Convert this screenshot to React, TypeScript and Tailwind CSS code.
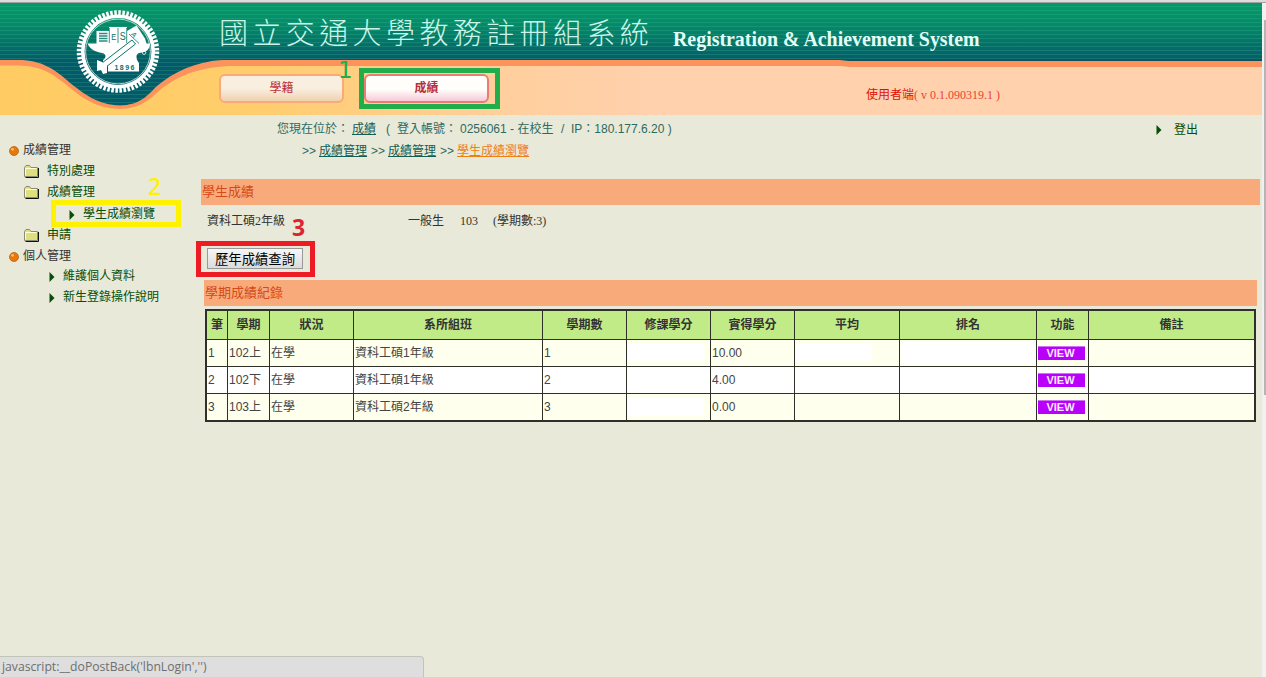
import React from "react";

const SANS = "font-['Liberation_Sans','Noto_Sans_CJK_TC',sans-serif]";
const SERIF = "font-['Liberation_Serif','Noto_Sans_CJK_TC',serif]";

function Banner() {
  const stripes = Array.from({ length: 25 }, (_, i) => 6 + i * 4);
  return (
    <svg className="absolute inset-0" width="1262" height="112" viewBox="0 3 1262 112">
      <defs>
        <linearGradient id="green" x1="0" y1="3" x2="0" y2="62" gradientUnits="userSpaceOnUse">
          <stop offset="0" stopColor="#049a68" />
          <stop offset="0.35" stopColor="#058b69" />
          <stop offset="1" stopColor="#045a68" />
        </linearGradient>
        <linearGradient id="sand" x1="0" y1="0" x2="1262" y2="0" gradientUnits="userSpaceOnUse">
          <stop offset="0" stopColor="#ffcb62" />
          <stop offset="0.2" stopColor="#ffcd6c" />
          <stop offset="0.4" stopColor="#ffcf9d" />
          <stop offset="0.52" stopColor="#ffd1ad" />
          <stop offset="1" stopColor="#ffd1ad" />
        </linearGradient>
        <clipPath id="greenClip">
          <path d="M0 3H1262V61H850L840 60H222C194 62 174 72 157 86C147 96 140 105 120 105.500C98 105 84 94 70 83C56 70 42 60 18 60H0Z" />
        </clipPath>
      </defs>
      <rect x="0" y="3" width="1262" height="112" fill="url(#sand)" />
      <path
        d="M0 60H18C42 60 56 70 70 83C84 94 98 105 120 105.500C140 105 147 96 157 86C174 72 194 60 222 60H840L850 61H1262V67H850L840 66H228C200 68 180 74 160 90C150 99 141 108.500 120 109C97 108.500 82 98 69 87C53 74 42 66 18 65.500H0Z"
        fill="#fc935c"
      />
      <g clipPath="url(#greenClip)">
        <rect x="0" y="3" width="1262" height="104" fill="url(#green)" />
        {stripes.map((y) => (
          <rect key={y} x="0" y={y} width="1262" height="1" fill="#58c6a0" opacity="0.2" />
        ))}
        <rect x="222" y="59" width="1040" height="2" fill="#174b55" opacity="0.65" />
      </g>
    </svg>
  );
}

function Seal() {
  return (
    <svg className="ml-[76px] mt-[7px] shrink-0" width="84" height="84" viewBox="0 0 84 84">
      <circle cx="42" cy="41.500" r="38.500" fill="none" stroke="#fff" strokeWidth="5.500" strokeDasharray="2.500 1.532" />
      <circle cx="42" cy="41.500" r="35.200" fill="none" stroke="#fff" strokeWidth="3.600" />
      <circle cx="42" cy="41.500" r="32.400" fill="none" stroke="#d7f0ea" strokeWidth="0.800" />
      <path d="M20.500 21H33V17H51V21L60.500 15.500L69 28.500L70.500 33.500H74C74 37 72 42 66 42.500C62 43 60.500 44 60.500 47C60.500 50 62 51.500 63 53H27V50C30 48 31 44 26 43C19 42 14 39 11.500 33.500H20.500Z" fill="#fff" />
      <path d="M32 53H63V61.500H32Z" fill="#fff" />
      <path d="M23 23.500h8.500M23 26h8.500M23 28.500h8.500M23 31h8.500" stroke="#2d8c80" strokeWidth="1.300" />
      <path d="M33.300 18v15M42 18v15M50.700 18v15" stroke="#087a69" strokeWidth="0.800" />
      <path d="M26 53L56 30L59.500 34L30 57Z" fill="#fff" stroke="#08756a" strokeWidth="1" />
      <path d="M21 50L26 52L31 56V63L27 64L25 60L21 61Z" fill="#fff" />
      <path d="M53 24L63 33.500" stroke="#08756a" strokeWidth="0.800" />
      <path d="M68 41a1.700 1.700 0 1 0 .1 0" fill="none" stroke="#fff" strokeWidth="0.900" />
      <g fill="#08706a" fontFamily="Liberation Sans">
        <text x="35.200" y="30" fontSize="9" textLength="5" lengthAdjust="spacingAndGlyphs">E</text>
        <text x="43.800" y="30" fontSize="10" textLength="6" lengthAdjust="spacingAndGlyphs">S</text>
        <text x="56" y="28" fontSize="7" transform="rotate(55 59 25)">A</text>
        <text x="38.500" y="60" fontSize="7" fontWeight="bold" textLength="20">1896</text>
      </g>
    </svg>
  );
}

function Orb() {
  return (
    <svg className="mt-[3px] shrink-0" width="10" height="10" viewBox="0 0 10 10">
      <circle cx="5" cy="5" r="4.500" fill="#e9780b" stroke="#a85d0e" strokeWidth="0.700" />
      <circle cx="3.500" cy="3.300" r="1.400" fill="#ffb86e" />
    </svg>
  );
}

function Folder() {
  return (
    <svg className="mt-px shrink-0" width="15" height="13" viewBox="0 0 15 13">
      <path d="M1.500 12.500H14.500V3" fill="none" stroke="#111" />
      <path d="M0.500 11.500V2.500L2 .5H5.500L7 2.500H13.500V11.500Z" fill="#dfdf80" stroke="#8a8a78" />
      <path d="M1.500 10.500V3.500H12.500" fill="none" stroke="#ffffd8" />
    </svg>
  );
}

function Arrow() {
  return (
    <svg className="mt-[2px] shrink-0" width="6" height="10" viewBox="0 0 6 10">
      <path d="M0.500 0V10L5.500 5Z" fill="#074f08" />
    </svg>
  );
}

function Sidebar() {
  const row = "flex h-[21px] items-center text-[#064d06]";
  return (
    <nav className="w-[200px] shrink-0 pt-[24px] text-[12px] leading-[20px]">
      <div className="flex h-[21px] items-center gap-[4px] pl-[9px] text-[#333]"><Orb />成績管理</div>
      <div className={`${row} gap-[8px] pl-[24px]`}><Folder />特別處理</div>
      <div className="flex h-[22px] items-center gap-[8px] pl-[24px] text-[#064d06]"><Folder />成績管理</div>
      <div className={`${row} gap-[8px] pl-[69px]`}><Arrow />學生成績瀏覽</div>
      <div className={`${row} gap-[8px] pl-[24px]`}><Folder />申請</div>
      <div className="flex h-[21px] items-center gap-[4px] pl-[9px] text-[#333]"><Orb />個人管理</div>
      <div className="flex h-[20px] items-center gap-[8px] pl-[49px] text-[#064d06]"><Arrow />維護個人資料</div>
      <div className="flex h-[21px] items-center gap-[8px] pl-[49px] text-[#064d06]"><Arrow />新生登錄操作說明</div>
    </nav>
  );
}

const headings = ["筆", "學期", "狀況", "系所組班", "學期數", "修課學分", "實得學分", "平均", "排名", "功能", "備註"];
const records = [
  ["1", "102上", "在學", "資科工碩1年級", "1", "", "10.00", "", "", "VIEW", ""],
  ["2", "102下", "在學", "資科工碩1年級", "2", "", "4.00", "", "", "VIEW", ""],
  ["3", "103上", "在學", "資科工碩2年級", "3", "", "0.00", "", "", "VIEW", ""],
];

function Blank({ row, col }: { row: number; col: number }) {
  if (col === 5 && row !== 1) return <span className="h-[18px] w-[76px] bg-white" />;
  if (col === 7 && row === 0) return <span className="h-[18px] w-[76px] bg-white" />;
  if (col === 8 && row === 0) return <span className="h-[22px] w-[134px] bg-white" />;
  return null;
}

function Records() {
  return (
    <div className="ml-[5px] mt-[3px] grid h-[113px] w-[1051px] grid-cols-[20px_41px_83px_188px_83px_83px_83px_104px_136px_51px_1fr] grid-rows-[28px_26px_26px_26px] gap-px border-2 border-[#30302a] bg-[#30302a] text-[12px] text-[#444]">
      {headings.map((h) => (
        <div key={h} className="flex items-center justify-center whitespace-nowrap bg-[#c0eb87] font-bold text-[#333]">{h}</div>
      ))}
      {records.map((r, i) =>
        r.map((c, j) => (
          <div
            key={`${i}-${j}`}
            className={`flex items-center whitespace-nowrap pl-px ${i === 1 ? "bg-white" : "bg-[#ffffee]"}`}
          >
            {c === "VIEW" ? (
              <span className="h-[14px] w-[47px] border-t border-[#cf70f5] bg-[#b900fa] pr-[2px] text-center text-[11px] font-bold leading-[13px] text-[#fbeaff]">VIEW</span>
            ) : (
              c || <Blank row={i} col={j} />
            )}
          </div>
        )),
      )}
    </div>
  );
}

export default function App() {
  return (
    <div className={`relative flex h-[677px] w-[1266px] flex-col overflow-hidden bg-[#e8e9d9] ${SANS}`}>
      <div className="h-[3px] shrink-0 border-b border-[#a0a0a0] bg-[#dcdcdc]" />
      <div className="flex min-h-0 flex-1">
        <div className="flex w-[1262px] shrink-0 flex-col">
          <header className="relative h-[112px] shrink-0">
            <Banner />
            <div className="relative flex h-full">
              <Seal />
              <div className="ml-[59px] flex flex-col">
                <div className="flex h-[60px] items-center whitespace-nowrap">
                  <h1 className="mb-[4px] w-[454px] font-['Noto_Sans_CJK_TC',sans-serif] text-[29px] font-light leading-[40px] tracking-[4.4px] text-[#c9f5ea]">國立交通大學教務註冊組系統</h1>
                  <span className="mt-[12px] font-['Liberation_Serif',serif] text-[19.9px] font-bold leading-[24px] text-[#e2fff9]">Registration &amp; Achievement System</span>
                </div>
                <div className="mt-[11px] flex h-[29px] items-center text-[12px] text-[#b9303c]">
                  <button className="h-[29px] w-[125px] rounded-[6px] border-2 border-[#f8aa78] bg-linear-to-b from-[#f8efe0] from-50% to-[#f0d0ae] pb-px">學籍</button>
                  <button className="ml-[20px] h-[29px] w-[125px] rounded-[6px] border-2 border-[#ee7a72] bg-linear-to-b from-[#fffefa] from-55% to-[#f6c9d8] pb-px font-bold">成績</button>
                  <span className={`ml-[377px] mt-[12px] whitespace-nowrap text-[#e01008] ${SERIF}`}>使用者端<span className="text-[#ec4038]">( v 0.1.090319.1 )</span></span>
                </div>
              </div>
            </div>
          </header>

          <div className="flex min-h-0 flex-1">
            <Sidebar />
            <main className="min-w-0 flex-1">
              <div className="flex h-[28px] items-center whitespace-pre pl-[77px] text-[12px] text-[#2e6a60]">
                <span className="w-[75px]">您現在位於：</span>
                <a className="w-[34px] text-[#125e52]"><u>成績</u></a>
                <span className="w-[11px]">(</span>
                <span className="w-[63px]">登入帳號：</span>
                <span className="w-[101px]">0256061 - 在校生</span>
                <span className="w-[10px]">/</span>
                <span className="w-[585px]">IP：180.177.6.20 )</span>
                <Arrow />
                <a className="ml-[12px] mt-px text-[#064d06]">登出</a>
              </div>
              <div className="flex h-[16px] items-center gap-[3px] pl-[102px] text-[12px] text-[#2e6a60]">
                <span>&gt;&gt;</span><a className="text-[#125e52] underline">成績管理</a>
                <span className="ml-px">&gt;&gt;</span><a className="text-[#125e52] underline">成績管理</a>
                <span className="ml-px">&gt;&gt;</span><a className="text-[#ef7f12] underline">學生成績瀏覽</a>
              </div>
              <h2 className="ml-px mt-[20px] h-[26px] w-[1059px] bg-[#f8aa7a] pl-px text-[13px] leading-[26px] text-[#d44a18]">學生成績</h2>
              <div className={`flex h-[32px] items-center pl-[7px] text-[12px] text-[#333] ${SERIF}`}>
                <span className="w-[201px]">資科工碩2年級</span>
                <span className="w-[52px]">一般生</span>
                <span className="w-[33px]">103</span>
                <span>(學期數:3)</span>
              </div>
              <button className="ml-[7px] mt-[11px] block h-[21px] w-[96px] whitespace-nowrap border border-[#999] bg-linear-to-b from-[#f6f6f6] to-[#dcdcdc] text-[13.33px] leading-[21px] text-black">歷年成績查詢</button>
              <h2 className="ml-[4px] mt-[11px] h-[26px] w-[1053px] bg-[#f8aa7a] pl-px text-[13px] leading-[26px] text-[#d44a18]">學期成績紀錄</h2>
              <Records />
            </main>
          </div>
        </div>
        <div className="w-[4px] bg-[#f1f1f1] pl-[2px] pt-[17px]">
          <div className="h-[375px] bg-[#b5b5b8]" />
        </div>
      </div>

      <div className="absolute left-[359px] top-[68px] h-[41px] w-[141px] border-[5px] border-[#22ad4c]" />
      <span className="absolute left-[338px] top-[58px] font-['DejaVu_Sans',sans-serif] text-[23px] leading-[25px] text-[#22ad4c]">1</span>
      <div className="absolute left-[51px] top-[200px] h-[27px] w-[130px] border-[5px] border-[#fff200]" />
      <span className="absolute left-[148px] top-[174px] font-['Noto_Sans',sans-serif] text-[23px] font-medium leading-[25px] text-[#fff200]">2</span>
      <div className="absolute left-[196px] top-[241px] h-[36px] w-[119px] border-[5px] border-[#ed1c24]" />
      <span className="absolute left-[292px] top-[215px] font-['Noto_Sans',sans-serif] text-[23px] font-bold leading-[25px] text-[#dc2430]">3</span>

      <div className="absolute bottom-0 left-0 h-[21px] w-[424px] rounded-tr-[4px] border-r border-t border-[#c2c4ba] bg-[#dedede] pl-[2px] font-['Open_Sans',sans-serif] text-[12.2px] leading-[20px] text-[#6e6e6e]">javascript:__doPostBack('lbnLogin','')</div>
    </div>
  );
}
